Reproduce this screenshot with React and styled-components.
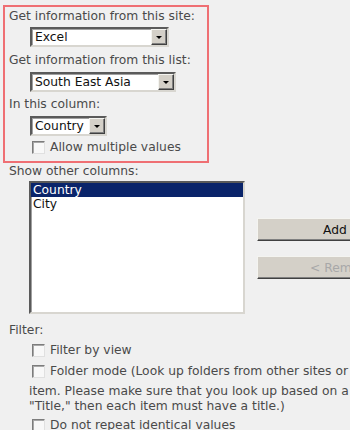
import React from "react";
import styled, { createGlobalStyle } from "styled-components";

const Global = createGlobalStyle`
  html, body {
    margin: 0;
    padding: 0;
    background: #f0f0f0;
    overflow: hidden;
  }
  body {
    font-family: "DejaVu Sans", Verdana, sans-serif;
    font-size: 12.3px;
    color: #4a4a4a;
  }
`;

const Page = styled.div`
  width: 350px;
  height: 430px;
  overflow: hidden;
  padding-top: 5px;
  box-sizing: border-box;
`;

const RedBox = styled.div`
  box-sizing: border-box;
  margin-left: 3px;
  width: 206px;
  height: 158px;
  border: 2px solid #ef6f73;
  padding: 2px 0 0 4px;
  display: flex;
  flex-direction: column;
  align-items: flex-start;
`;

const Label = styled.div`
  line-height: 15px;
  white-space: nowrap;
  margin-top: ${(p) => p.$mt || 0}px;
`;

const Section = styled.div`
  padding-left: 9px;
  display: flex;
  flex-direction: column;
  align-items: flex-start;
`;

const SelectBox = styled.div`
  box-sizing: border-box;
  margin-left: 21px;
  margin-top: ${(p) => p.$mt || 3}px;
  width: ${(p) => p.$w}px;
  height: 20px;
  display: flex;
  align-items: center;
  background: #fff;
  border-style: solid;
  border-width: 2px;
  border-color: #5a5a5a #d8d6d0 #d8d6d0 #5a5a5a;
  box-shadow: inset 1px 1px 0 #a0a0a0;
`;

const SelectText = styled.span`
  flex: 1;
  color: #111;
  padding-left: 3px;
  line-height: 16px;
  white-space: nowrap;
  overflow: hidden;
`;

const ArrowBtn = styled.span`
  box-sizing: border-box;
  width: 16px;
  height: 16px;
  background: #d4d0c8;
  border-style: solid;
  border-width: 1px;
  border-color: #f4f4f0 #404040 #404040 #f4f4f0;
  box-shadow: inset -1px -1px 0 #808080;
  display: flex;
  align-items: center;
  justify-content: center;
`;

const Tri = styled.span`
  width: 0;
  height: 0;
  border-left: 3px solid transparent;
  border-right: 3px solid transparent;
  border-top: 3px solid #000;
  margin-top: 1px;
`;

const CheckRow = styled.div`
  display: flex;
  align-items: center;
  margin-left: ${(p) => p.$ml || 23}px;
  margin-top: ${(p) => p.$mt || 0}px;
  line-height: 15px;
  white-space: nowrap;
`;

const Box = styled.span`
  box-sizing: border-box;
  width: 13px;
  height: 13px;
  flex: none;
  background: #f8f8f8;
  border-style: solid;
  border-width: 1px;
  border-color: #7c7c7c #e0e0e0 #e0e0e0 #7c7c7c;
  box-shadow: inset 1px 1px 0 #a8a8a8;
  margin-right: 5px;
`;

const ListRow = styled.div`
  display: flex;
  align-items: flex-start;
  margin-top: 2px;
  margin-left: 20px;
`;

const ListBox = styled.div`
  box-sizing: border-box;
  width: 216px;
  height: 133px;
  background: #fff;
  border-style: solid;
  border-width: 2px;
  border-color: #5a5a5a #d8d6d0 #d8d6d0 #5a5a5a;
  box-shadow: inset 1px 1px 0 #a0a0a0;
`;

const Option = styled.div`
  height: 14px;
  line-height: 14px;
  padding-left: 2px;
  color: ${(p) => (p.$sel ? "#fff" : "#111")};
  background: ${(p) => (p.$sel ? "#0a246a" : "transparent")};
`;

const Buttons = styled.div`
  display: flex;
  flex-direction: column;
  gap: 15px;
  padding-top: 37px;
  margin-left: 12px;
  flex: none;
`;

const Button = styled.div`
  box-sizing: border-box;
  width: 170px;
  height: 23px;
  background: #d4d0c8;
  border-style: solid;
  border-width: 1px;
  border-color: #f4f4f0 #404040 #404040 #f4f4f0;
  box-shadow: inset 0 -1px 0 #808080;
  display: flex;
  align-items: center;
  justify-content: center;
  color: ${(p) => (p.$disabled ? "#a8a8a8" : "#111")};
  white-space: nowrap;
`;

const Wrap = styled.div`
  margin-left: 20px;
  margin-top: 5px;
  line-height: 15px;
  white-space: nowrap;
`;

export default function App() {
  return (
    <>
      <Global />
      <Page>
        <RedBox>
          <Label>Get information from this site:</Label>
          <SelectBox $w={139}>
            <SelectText>Excel</SelectText>
            <ArrowBtn><Tri /></ArrowBtn>
          </SelectBox>
          <Label $mt={6}>Get information from this list:</Label>
          <SelectBox $w={146} $mt={4}>
            <SelectText>South East Asia</SelectText>
            <ArrowBtn><Tri /></ArrowBtn>
          </SelectBox>
          <Label $mt={5}>In this column:</Label>
          <SelectBox $w={77} $mt={4}>
            <SelectText>Country</SelectText>
            <ArrowBtn><Tri /></ArrowBtn>
          </SelectBox>
          <CheckRow $mt={4}>
            <Box />
            Allow multiple values
          </CheckRow>
        </RedBox>
        <Section>
          <Label $mt={1}>Show other columns:</Label>
          <ListRow>
            <ListBox>
              <Option $sel>Country</Option>
              <Option>City</Option>
            </ListBox>
            <Buttons>
              <Button>Add &gt;</Button>
              <Button $disabled>&lt; Remove</Button>
            </Buttons>
          </ListRow>
          <Label $mt={9}>Filter:</Label>
          <CheckRow $mt={5}>
            <Box />
            Filter by view
          </CheckRow>
          <CheckRow $mt={6}>
            <Box />
            Folder mode (Look up folders from other sites or lists)
          </CheckRow>
          <Wrap>
            item. Please make sure that you look up based on a required column
            <br />
            "Title," then each item must have a title.)
          </Wrap>
          <CheckRow $mt={4}>
            <Box />
            Do not repeat identical values
          </CheckRow>
        </Section>
      </Page>
    </>
  );
}
